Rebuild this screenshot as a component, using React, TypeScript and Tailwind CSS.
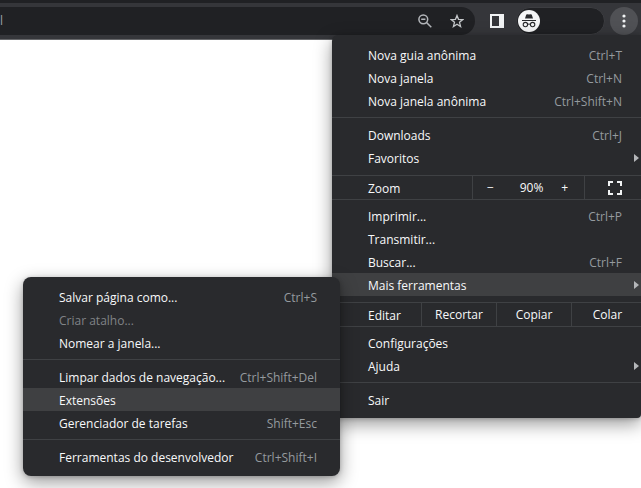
import type { ReactNode } from 'react';

type ItemProps = {
    label: string;
    shortcut?: string;
    arrow?: boolean;
    active?: boolean;
    disabled?: boolean;
};

function MenuItem({ label, shortcut, arrow, active, disabled }: ItemProps) {
    return (
        <button
            type="button"
            role="menuitem"
            disabled={disabled}
            className={`flex h-[23px] w-full items-center pt-0.5 pl-9 ${active ? 'bg-[#3f4042]' : ''} ${disabled ? 'text-[#808387]' : 'text-[#f8f9fa]'}`}
        >
            <span>{label}</span>
            {shortcut && <span className="ml-auto pr-[var(--menu-end)] text-[#959a9f]">{shortcut}</span>}
            {arrow && (
                <svg className="-mt-0.5 mr-0.5 ml-auto h-2 w-[5px]" viewBox="0 0 5 8" fill="#b4b6b9">
                    <path d="M0 0l5 4-5 4z" />
                </svg>
            )}
        </button>
    );
}

function Separator() {
    return <div role="separator" className="my-[5px] h-px bg-[#3f4144]" />;
}

function Menu({ label, className, children }: { label: string; className: string; children: ReactNode }) {
    return (
        <div
            role="menu"
            aria-label={label}
            className={`absolute bg-[#292a2d] pt-2 shadow-[0_6px_18px_rgba(0,0,0,0.4),0_1px_4px_rgba(0,0,0,0.2)] ${className}`}
        >
            {children}
        </div>
    );
}

export default function App() {
    return (
        <div className="min-h-screen bg-white font-['Open_Sans','Noto_Sans',sans-serif] text-[12px] leading-4 text-[#f8f9fa]">
            {/* Toolbar */}
            <header className="relative border-t-[3px] border-b border-t-[#202124] border-b-[#66676a] bg-[#35363a]">
                <div className="flex items-center pt-1 pr-[3px] pb-1">
                    <div className="flex h-7 min-w-0 flex-1 items-center rounded-r-full bg-[#202124] pr-[11px]">
                        <input
                            type="text"
                            aria-label="Barra de endereço"
                            defaultValue="l"
                            className="min-w-0 flex-1 bg-transparent text-[#9aa0a6] outline-none"
                        />
                        <button type="button" aria-label="Zoom" className="mr-[18px]">
                            <svg className="h-[14px] w-[14px]" viewBox="0 0 14 14" fill="none" stroke="#b4b7bb" strokeWidth="1.5">
                                <circle cx="5.3" cy="5.3" r="4.4" />
                                <path d="M8.5 8.5l4.8 4.8M3.2 5.3h4.2" />
                            </svg>
                        </button>
                        <button type="button" aria-label="Adicionar aos favoritos">
                            <svg className="h-[14px] w-[14px]" viewBox="0 0 14 14" fill="none" stroke="#c4c7ca" strokeWidth="1.3">
                                <path d="M7 1.5l1.5 3.8 4.3.3-3.3 2.7 1.1 4.3L7 10.3l-3.6 2.3 1.1-4.3L1.2 5.6l4.3-.3z" />
                            </svg>
                        </button>
                    </div>
                    <button type="button" aria-label="Painel lateral" className="ml-[15px]">
                        <svg className="h-[14px] w-[14px]" viewBox="0 0 14 14" fill="#f1f3f4" fillRule="evenodd">
                            <path d="M0 0h14v14H0zM2 2v10h7V2z" />
                        </svg>
                    </button>
                    <button
                        type="button"
                        aria-label="Anônima"
                        className="ml-3 flex h-7 w-[89px] items-center rounded-full border border-[#3c3d41] bg-[#202124] pl-px"
                    >
                        <svg className="h-[22px] w-[22px]" viewBox="0 0 22 22">
                            <circle cx="11" cy="11" r="11" fill="#f5f6f7" />
                            <path d="M7 8.6l1.1-3.7c.2-.7.7-.9 1.3-.7l1.6.4 1.6-.4c.6-.2 1.1 0 1.3.7L15 8.6z" fill="#292a2d" />
                            <path d="M4 10.5h14" stroke="#292a2d" strokeWidth="1" />
                            <g fill="none" stroke="#292a2d" strokeWidth="1.1">
                                <circle cx="7.4" cy="14.6" r="2.2" />
                                <circle cx="14.6" cy="14.6" r="2.2" />
                                <path d="M9.6 14.4q1.4-.9 2.8 0" />
                            </g>
                        </svg>
                    </button>
                    <button
                        type="button"
                        aria-label="Menu"
                        className="ml-[5px] flex h-7 w-7 items-center justify-center rounded-full bg-[#505155]"
                    >
                        <svg className="h-[14px] w-1" viewBox="0 0 4 14" fill="#f1f3f4">
                            <circle cx="2" cy="2" r="1.6" />
                            <circle cx="2" cy="7" r="1.6" />
                            <circle cx="2" cy="12" r="1.6" />
                        </svg>
                    </button>
                </div>

                <Menu label="Menu principal" className="top-8 right-0 w-[309px] rounded-tl-md rounded-br-sm pb-[7px] [--menu-end:19px]">
                    <MenuItem label="Nova guia anônima" shortcut="Ctrl+T" />
                    <MenuItem label="Nova janela" shortcut="Ctrl+N" />
                    <MenuItem label="Nova janela anônima" shortcut="Ctrl+Shift+N" />
                    <Separator />
                    <MenuItem label="Downloads" shortcut="Ctrl+J" />
                    <MenuItem label="Favoritos" arrow />

                    {/* Zoom */}
                    <div className="mt-1.5 mb-1 flex h-[25px] border-y border-[#3f4144]">
                        <span className="flex-1 pt-[5px] pl-9">Zoom</span>
                        <div className="flex w-[113px] items-center justify-between border-x border-[#3f4144] pr-4 pl-3.5">
                            <button type="button" aria-label="Diminuir zoom">−</button>
                            <span className="pl-2">90%</span>
                            <button type="button" aria-label="Aumentar zoom">+</button>
                        </div>
                        <button type="button" aria-label="Tela cheia" className="flex w-14 items-center pl-[23px]">
                            <svg className="h-[14px] w-[14px]" viewBox="0 0 14 14" fill="none" stroke="#f1f3f4" strokeWidth="2">
                                <path d="M1 5V1h4M9 1h4v4M13 9v4H9M5 13H1V9" />
                            </svg>
                        </button>
                    </div>

                    <MenuItem label="Imprimir..." shortcut="Ctrl+P" />
                    <MenuItem label="Transmitir..." />
                    <MenuItem label="Buscar..." shortcut="Ctrl+F" />
                    <div className="relative">
                        <MenuItem label="Mais ferramentas" arrow active />
                        <Menu
                            label="Mais ferramentas"
                            className="top-1 right-full z-10 -mr-2 w-[317px] rounded-lg pb-2 [--menu-end:23px]"
                        >
                            <MenuItem label="Salvar página como..." shortcut="Ctrl+S" />
                            <MenuItem label="Criar atalho..." disabled />
                            <MenuItem label="Nomear a janela..." />
                            <Separator />
                            <MenuItem label="Limpar dados de navegação..." shortcut="Ctrl+Shift+Del" />
                            <MenuItem label="Extensões" active />
                            <MenuItem label="Gerenciador de tarefas" shortcut="Shift+Esc" />
                            <Separator />
                            <MenuItem label="Ferramentas do desenvolvedor" shortcut="Ctrl+Shift+I" />
                        </Menu>
                    </div>

                    {/* Edit */}
                    <div className="mt-1.5 mb-1 flex h-[25px] border-y border-[#3f4144]">
                        <span className="flex-1 pt-[5px] pl-9">Editar</span>
                        <button type="button" className="w-[75px] border-l border-[#3f4144]">Recortar</button>
                        <button type="button" className="w-[75px] border-l border-[#3f4144]">Copiar</button>
                        <button type="button" className="w-[70px] border-l border-[#3f4144] pl-0.5">Colar</button>
                    </div>

                    <MenuItem label="Configurações" />
                    <MenuItem label="Ajuda" arrow />
                    <Separator />
                    <MenuItem label="Sair" />
                </Menu>
            </header>
        </div>
    );
}
